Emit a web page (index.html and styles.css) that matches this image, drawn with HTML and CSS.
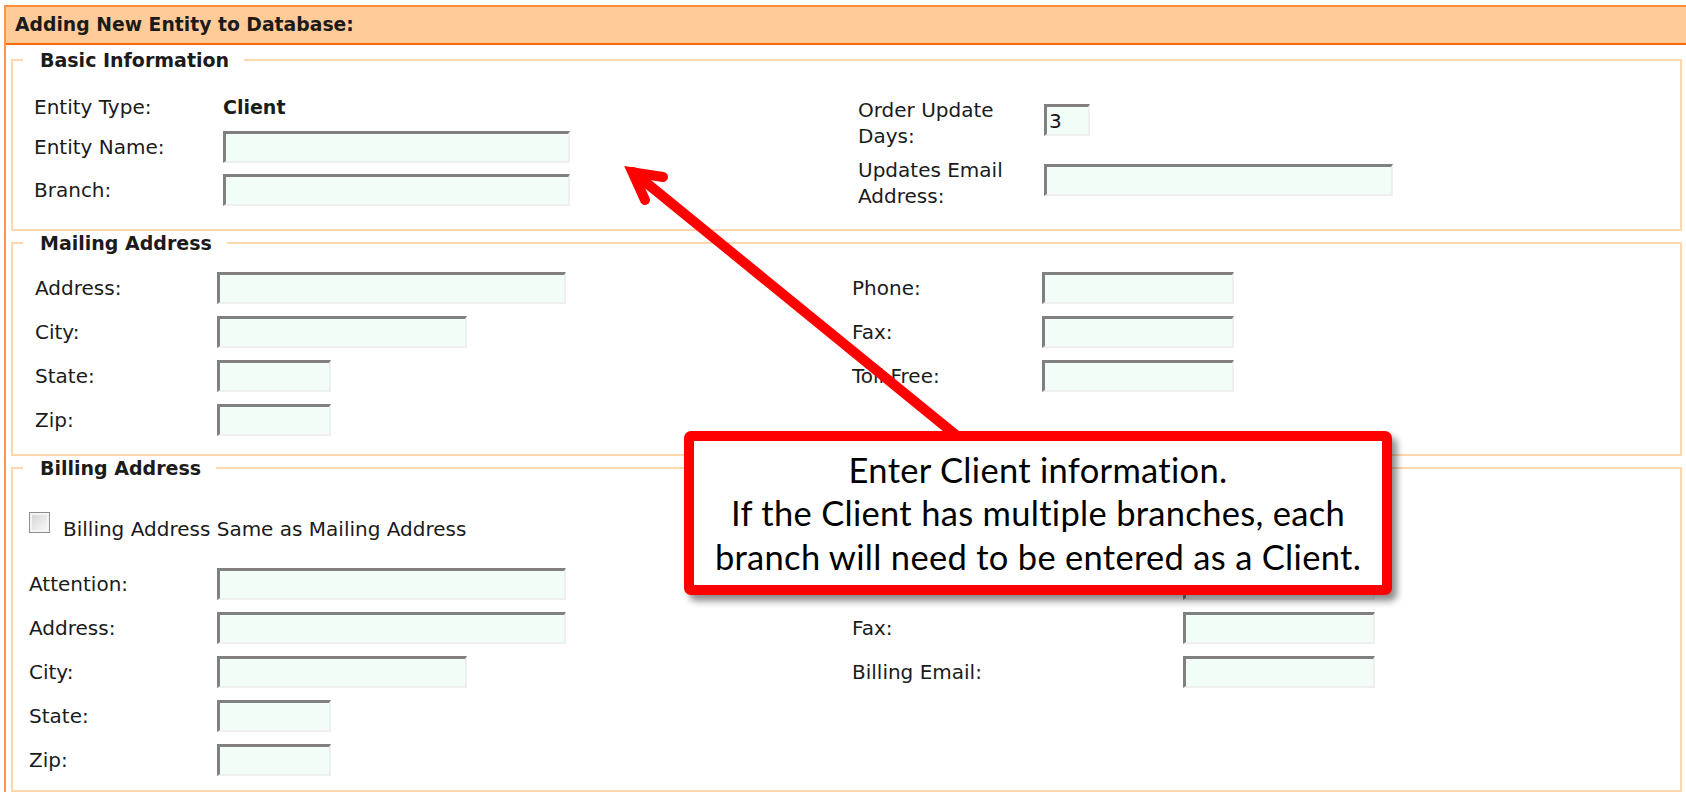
FILE: index.html
```html
<!DOCTYPE html>
<html lang="en">
<head>
<meta charset="utf-8">
<title>Adding New Entity to Database</title>
<link rel="stylesheet" href="styles.css">
</head>
<body>
<div class="panel">
  <div class="panel-title">Adding New Entity to Database:</div>
  <div class="panel-body">

    <fieldset class="group group-basic">
      <legend>Basic Information</legend>
      <div class="cols">
        <div class="col col-left">
          <div class="row row-text"><span class="lbl">Entity Type:</span><span class="val">Client</span></div>
          <div class="row"><label class="lbl">Entity Name:</label><input class="tb w-long" type="text"></div>
          <div class="row"><label class="lbl">Branch:</label><input class="tb w-long" type="text"></div>
        </div>
        <div class="col col-right">
          <div class="row row-tall"><label class="lbl">Order Update<br>Days:</label><input class="tb w-num" type="text" value="3"></div>
          <div class="row row-tall"><label class="lbl">Updates Email<br>Address:</label><input class="tb w-long" type="text"></div>
        </div>
      </div>
    </fieldset>

    <fieldset class="group group-mail">
      <legend>Mailing Address</legend>
      <div class="cols">
        <div class="col col-left">
          <div class="row"><label class="lbl">Address:</label><input class="tb w-long" type="text"></div>
          <div class="row"><label class="lbl">City:</label><input class="tb w-city" type="text"></div>
          <div class="row"><label class="lbl">State:</label><input class="tb w-short" type="text"></div>
          <div class="row"><label class="lbl">Zip:</label><input class="tb w-short" type="text"></div>
        </div>
        <div class="col col-right">
          <div class="row"><label class="lbl">Phone:</label><input class="tb w-phone" type="text"></div>
          <div class="row"><label class="lbl">Fax:</label><input class="tb w-phone" type="text"></div>
          <div class="row"><label class="lbl">Toll Free:</label><input class="tb w-phone" type="text"></div>
        </div>
      </div>
    </fieldset>

    <fieldset class="group group-bill">
      <legend>Billing Address</legend>
      <div class="check-row">
        <input class="chk" type="checkbox" id="same-as-mailing">
        <label for="same-as-mailing">Billing Address Same as Mailing Address</label>
      </div>
      <div class="cols">
        <div class="col col-left">
          <div class="row"><label class="lbl">Attention:</label><input class="tb w-long" type="text"></div>
          <div class="row"><label class="lbl">Address:</label><input class="tb w-long" type="text"></div>
          <div class="row"><label class="lbl">City:</label><input class="tb w-city" type="text"></div>
          <div class="row"><label class="lbl">State:</label><input class="tb w-short" type="text"></div>
          <div class="row"><label class="lbl">Zip:</label><input class="tb w-short" type="text"></div>
        </div>
        <div class="col col-right">
          <div class="row"><label class="lbl">Phone:</label><input class="tb w-phone" type="text"></div>
          <div class="row"><label class="lbl">Fax:</label><input class="tb w-phone" type="text"></div>
          <div class="row"><label class="lbl">Billing Email:</label><input class="tb w-phone" type="text"></div>
        </div>
      </div>
    </fieldset>

  </div>
</div>

<svg class="pointer" width="1686" height="792" viewBox="0 0 1686 792" aria-hidden="true">
  <path d="M957 436 L633 172" />
  <path d="M663 177 L632.5 172.4 L645 200" />
</svg>

<div class="callout">
  <p>Enter Client information.</p>
  <p>If the Client has multiple branches, each</p>
  <p>branch will need to be entered as a Client.</p>
</div>
</body>
</html>
```

FILE: styles.css
```css
html, body {
  margin: 0;
  padding: 0;
  background: #ffffff;
}

body {
  position: relative;
  width: 1686px;
  height: 792px;
  overflow: hidden;
  font-family: "DejaVu Sans", Verdana, sans-serif;
  font-size: 20px;
  color: #1b1b1b;
}

/* outer orange panel */
.panel {
  margin: 5px 0 0 4px;
  border-left: 2px solid #ff9550;
  border-top: 2px solid #ff8c40;
}

.panel-title {
  height: 36px;
  line-height: 36px;
  padding-left: 9px;
  background: #ffcc99;
  border-bottom: 2px solid #ff6a00;
  font-weight: bold;
  font-size: 18.8px;
}

.panel-body {
  padding-top: 3px;
}

/* field groups */
.group {
  margin: 0 4px 0 5px;
  padding: 0;
  border: 2px solid #ffd6ad;
  min-width: 0;
}

.group legend {
  margin-left: 10px;
  padding: 0 15px 0 17px;
  line-height: 24px;
  font-weight: bold;
  font-size: 19px;
}

.cols {
  display: flex;
}

.col {
  display: flex;
  flex-direction: column;
}

.row {
  display: flex;
  align-items: center;
  min-height: 32px;
}

.row-text {
  min-height: 26px;
}

/* two-line labels sit beside a box a little below their first line */
.row-tall {
  align-items: flex-start;
}

.row-tall .lbl {
  line-height: 26px;
}

.row-tall .tb {
  margin-top: 7px;
}

.lbl {
  flex: none;
}

.val {
  font-weight: bold;
  font-size: 19px;
}

/* text boxes */
.tb {
  box-sizing: border-box;
  height: 32px;
  margin: 0;
  padding: 0 4px;
  border-style: solid;
  border-width: 3px 2px 2px 3px;
  border-color: #808080 #efefef #efefef #808080;
  background: #f3fdf8;
  font: inherit;
  color: #111;
  outline: none;
}

.w-long { width: 349px; }
.w-city { width: 250px; }
.w-short { width: 114px; }
.w-phone { width: 192px; }
.w-num { width: 46px; padding-left: 2px; }

/* Basic Information */
.group-basic .cols { padding: 22px 0 20px 21px; }
.group-basic .col-left { width: 824px; gap: 11px; }
.group-basic .col-left .lbl { width: 189px; }
.group-basic .col-left .w-long { width: 347px; }
.group-basic .col-right { gap: 8px; padding-top: 3px; }
.group-basic .col-right .lbl { width: 186px; }

/* Mailing Address */
.group-mail .cols { padding: 17px 0 18px 22px; }
.group-mail .col { gap: 12px; }
.group-mail .col-left { width: 817px; }
.group-mail .col-left .lbl { width: 182px; }
.group-mail .col-right .lbl { width: 190px; }

/* Billing Address */
.check-row {
  display: flex;
  align-items: center;
  height: 24px;
  margin-top: 37px;
  padding-left: 16px;
}

.chk {
  appearance: none;
  -webkit-appearance: none;
  box-sizing: border-box;
  width: 21px;
  height: 21px;
  margin: -14px 13px 0 0;
  border: 1px solid #8e8f8f;
  background: linear-gradient(135deg, #d2d2d2 0%, #e9e9e9 55%, #fbfbfb 100%);
  box-shadow: inset 0 0 0 2px #f4f4f4;
}

.group-bill .cols { padding: 27px 0 14px 16px; }
.group-bill .col { gap: 12px; }
.group-bill .col-left { width: 823px; }
.group-bill .col-left .lbl { width: 188px; }
.group-bill .col-right .lbl { width: 331px; }

/* annotation arrow */
.pointer {
  position: absolute;
  left: 0;
  top: 0;
  pointer-events: none;
}

.pointer path {
  fill: none;
  stroke: #ff0000;
  stroke-width: 10;
  stroke-linecap: round;
  stroke-linejoin: miter;
  stroke-miterlimit: 8;
}

/* annotation callout */
.callout {
  position: absolute;
  left: 684px;
  top: 431px;
  box-sizing: border-box;
  width: 708px;
  height: 164px;
  border: 10px solid #ff0000;
  border-radius: 7px;
  background: #ffffff;
  box-shadow: 5px 6px 7px rgba(0, 0, 0, 0.45);
  display: flex;
  flex-direction: column;
  justify-content: center;
  align-items: center;
  font-family: Lato, "Open Sans", sans-serif;
  font-size: 34.5px;
  letter-spacing: 0.3px;
  line-height: 43.5px;
  color: #000;
}

.callout p {
  margin: 0;
  white-space: nowrap;
}
```
